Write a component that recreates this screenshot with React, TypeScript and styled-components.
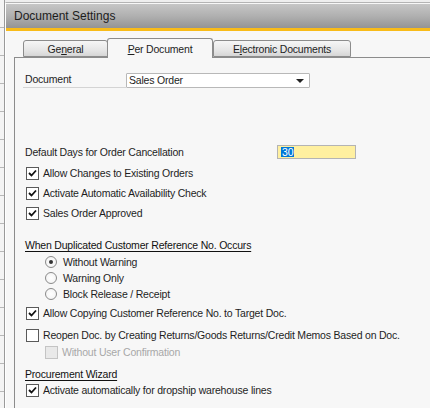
import React from "react";
import styled, { createGlobalStyle } from "styled-components";

const GlobalStyle = createGlobalStyle`
  html, body {
    margin: 0;
    padding: 0;
    background: #eeeeee;
  }
  body {
    font-family: "Liberation Sans", Arial, sans-serif;
    font-size: 10.5px;
    letter-spacing: -0.2px;
    color: #1e1e1e;
  }
`;

type Item =
  | { kind: "check"; label: string; checked: boolean; top: number; indent?: boolean; disabled?: boolean }
  | { kind: "radio"; label: string; checked: boolean; top: number }
  | { kind: "header"; label: string; top: number };

const items: Item[] = [
  { kind: "check", label: "Allow Changes to Existing Orders", checked: true, top: 5 },
  { kind: "check", label: "Activate Automatic Availability Check", checked: true, top: 4 },
  { kind: "check", label: "Sales Order Approved", checked: true, top: 4 },
  { kind: "header", label: "When Duplicated Customer Reference No. Occurs", top: 16 },
  { kind: "radio", label: "Without Warning", checked: true, top: 1 },
  { kind: "radio", label: "Warning Only", checked: false, top: 0 },
  { kind: "radio", label: "Block Release / Receipt", checked: false, top: 0 },
  { kind: "check", label: "Allow Copying Customer Reference No. to Target Doc.", checked: true, top: 3 },
  {
    kind: "check",
    label: "Reopen Doc. by Creating Returns/Goods Returns/Credit Memos Based on Doc.",
    checked: false,
    top: 6,
  },
  { kind: "check", label: "Without User Confirmation", checked: false, top: 1, indent: true, disabled: true },
  { kind: "header", label: "Procurement Wizard", top: 6 },
  { kind: "check", label: "Activate automatically for dropship warehouse lines", checked: true, top: 0 },
];

const Check = () => (
  <svg width="9" height="8" viewBox="0 0 9 8">
    <path d="M1 4 L3.5 6.5 L8 1.5" fill="none" stroke="#111" strokeWidth="1.8" />
  </svg>
);

export default function App() {
  return (
    <>
      <GlobalStyle />
      <Screen>
        <BackStrip />
        <Window>
          <TitleBar>Document Settings</TitleBar>
          <Body>
            <TabRow>
              <Tab $width={85}>
                Ge<u>n</u>eral
              </Tab>
              <Tab $width={106} $active>
                <u>P</u>er Document
              </Tab>
              <Tab $width={138}>
                E<u>l</u>ectronic Documents
              </Tab>
            </TabRow>
            <Panel>
              <Row $top={14}>
                <FieldLabel>Document</FieldLabel>
                <Select>
                  Sales Order
                  <Arrow />
                </Select>
              </Row>

              <Row $top={56}>
                <DaysLabel>Default Days for Order Cancellation</DaysLabel>
                <DaysInput>
                  <Selected>30</Selected>
                </DaysInput>
              </Row>

              {items.map((it, i) => {
                if (it.kind === "header") {
                  return (
                    <Row key={i} $top={it.top}>
                      <Header>{it.label}</Header>
                    </Row>
                  );
                }
                if (it.kind === "radio") {
                  return (
                    <Row key={i} $top={it.top} $indent={20}>
                      <Radio $checked={it.checked} />
                      <OptionText>{it.label}</OptionText>
                    </Row>
                  );
                }
                return (
                  <Row key={i} $top={it.top} $indent={it.indent ? 20 : 1}>
                    <Box $disabled={it.disabled}>{it.checked && <Check />}</Box>
                    <OptionText $disabled={it.disabled}>{it.label}</OptionText>
                  </Row>
                );
              })}
            </Panel>
          </Body>
        </Window>
      </Screen>
    </>
  );
}

// Styled Components

const Screen = styled.div`
  display: flex;
  width: 430px;
  height: 408px;
  overflow: hidden;
`;

const BackStrip = styled.div`
  width: 4px;
  flex-shrink: 0;
  background: repeating-linear-gradient(
    180deg,
    #f4f4f4 0px,
    #f4f4f4 27px,
    #b8b8b8 27px,
    #b8b8b8 28px
  );
  border-right: 1px solid #9a9a9a;
`;

const Window = styled.div`
  flex: 1;
  display: flex;
  flex-direction: column;
  margin-top: 2px;
  border-top: 1px solid #b4b4b4;
  border-left: 1px solid #ffffff;
  background: #f7f7f7;
`;

const TitleBar = styled.div`
  height: 24px;
  margin-top: 1px;
  padding-left: 8px;
  display: flex;
  align-items: center;
  font-size: 12px;
  letter-spacing: 0;
  color: #1c1c1c;
  background: linear-gradient(180deg, #c6c6c6 0%, #b0b0b0 50%, #949494 100%);
  border-bottom: 3px solid #f8bb19;
`;

const Body = styled.div`
  flex: 1;
  padding: 7px 0 0 8px;
  display: flex;
  flex-direction: column;
`;

const TabRow = styled.div`
  display: flex;
  align-items: flex-end;
  padding-left: 9px;
  height: 19px;
  position: relative;
  z-index: 1;
`;

const Tab = styled.div<{ $width: number; $active?: boolean }>`
  width: ${(p) => p.$width}px;
  box-sizing: border-box;
  height: ${(p) => (p.$active ? 20 : 17)}px;
  margin-bottom: ${(p) => (p.$active ? -1 : 0)}px;
  margin-right: ${(p) => (p.$active ? 0 : -1)}px;
  display: flex;
  align-items: center;
  justify-content: center;
  padding-top: ${(p) => (p.$active ? 0 : 1)}px;
  border: 1px solid #8c8c8c;
  border-bottom: ${(p) => (p.$active ? "none" : "1px solid #8c8c8c")};
  border-radius: 3px 3px 0 0;
  background: ${(p) =>
    p.$active ? "#f7f7f7" : "linear-gradient(180deg, #f6f6f6 0%, #e6e6e6 60%, #d6d6d6 100%)"};
  color: #1e1e1e;
`;

const Panel = styled.div`
  flex: 1;
  border-top: 1px solid #8c8c8c;
  border-left: 1px solid #8c8c8c;
  padding-left: 10px;
  display: flex;
  flex-direction: column;
`;

const Row = styled.div<{ $top: number; $indent?: number }>`
  height: 16px;
  margin-top: ${(p) => p.$top}px;
  padding-left: ${(p) => p.$indent ?? 0}px;
  display: flex;
  align-items: center;
`;

const FieldLabel = styled.div`
  width: 101px;
  height: 15px;
  margin-left: -2px;
  padding-left: 2px;
  line-height: 15px;
  border-bottom: 1px solid #d4d4d4;
  align-self: flex-start;
`;

const Select = styled.div`
  position: relative;
  width: 184px;
  height: 15px;
  box-sizing: border-box;
  padding-left: 2px;
  line-height: 13px;
  background: #ffffff;
  border: 1px solid #b8b8b8;
  border-radius: 1px;
`;

const Arrow = styled.span`
  position: absolute;
  right: 5px;
  top: 5px;
  width: 0;
  height: 0;
  border-left: 4px solid transparent;
  border-right: 4px solid transparent;
  border-top: 4px solid #222;
`;

const DaysLabel = styled.div`
  width: 252px;
`;

const DaysInput = styled.div`
  width: 79px;
  height: 14px;
  box-sizing: border-box;
  padding: 1px 0 1px 3px;
  display: flex;
  background: #fff0a0;
  border: 1px solid #b4b4b4;
`;

const Selected = styled.span`
  background: #0078d7;
  color: #ffffff;
  line-height: 10px;
  padding: 0 1px;
`;

const Header = styled.div`
  text-decoration: underline;
  text-underline-offset: 2px;
  color: #111;
`;

const Box = styled.div<{ $disabled?: boolean }>`
  width: 13px;
  height: 13px;
  box-sizing: border-box;
  border: 1px solid ${(p) => (p.$disabled ? "#c4c4c4" : "#5a5a5a")};
  background: ${(p) => (p.$disabled ? "#e9e9e9" : "#ffffff")};
  display: flex;
  align-items: center;
  justify-content: center;
  margin-right: 4px;
`;

const Radio = styled.div<{ $checked: boolean }>`
  width: 12px;
  height: 12px;
  box-sizing: border-box;
  border-radius: 50%;
  border: 1px solid #8a8a8a;
  background: radial-gradient(circle, #ffffff 0%, #f0f0f0 100%);
  display: flex;
  align-items: center;
  justify-content: center;
  margin-right: 6px;

  &::after {
    content: "";
    width: 4px;
    height: 4px;
    border-radius: 50%;
    background: ${(p) => (p.$checked ? "#333" : "transparent")};
  }
`;

const OptionText = styled.span<{ $disabled?: boolean }>`
  color: ${(p) => (p.$disabled ? "#a8a8a8" : "#1e1e1e")};
  white-space: nowrap;
`;
